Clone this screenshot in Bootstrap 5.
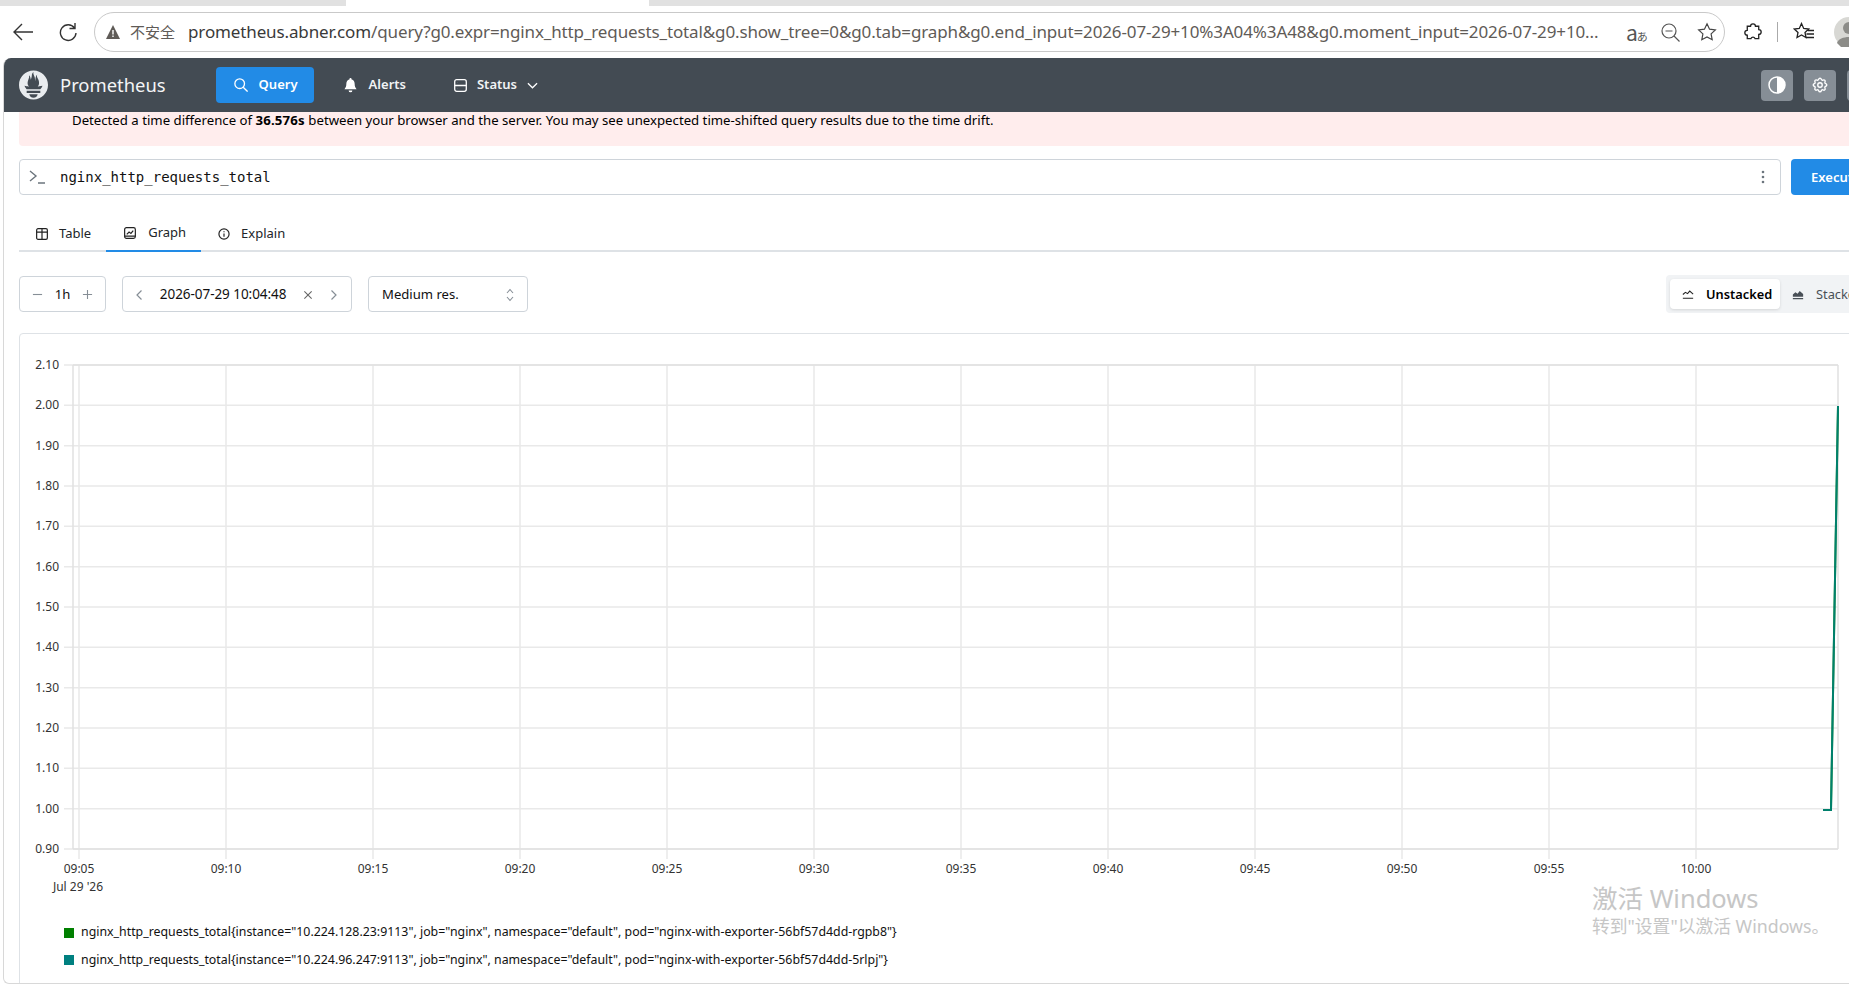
<!DOCTYPE html>
<html lang="en">
<head>
  <meta charset="UTF-8">
  <title>Prometheus Time Series Collection and Processing Server</title>
  <link href="https://cdn.jsdelivr.net/npm/bootstrap@5.3.0/dist/css/bootstrap.min.css" rel="stylesheet" />
  <style>
    html, body { height: 985px; overflow: hidden; }
    body { font-family: "Noto Sans", "Open Sans", sans-serif; font-size: 13.2px; color: #000; background: #fff; width: 1849px; position: relative; }
    svg { display: block; flex: none; }

    /* browser chrome */
    .tab-strip { height: 6px; background: #e1e1e1; }
    .tab-one { width: 346px; background: #e1e1e1; border-radius: 0 0 8px 0; }
    .tab-two { width: 303px; background: #fff; }
    .tab-rest { flex: 1; background: #e1e1e1; border-radius: 0 0 0 8px; }
    .url-row { height: 52px; padding: 6px 0 6px 13px; background: #fff; white-space: nowrap; overflow: hidden; }
    .reload-ico { margin-left: 26px; }
    .url-pill { width: 1631px; height: 40px; margin-left: 17px; padding: 0 7px 0 11px; border: 1px solid #c9c9c9; border-radius: 20px; flex: none; }
    .url-warn { font-family: "Noto Sans CJK SC", sans-serif; font-size: 15px; color: #5f5b57; margin: 0 13px 0 10px; }
    .url-text { font-size: 17px; color: #5f5b57; letter-spacing: -.13px; }
    .url-text b { font-weight: 400; color: #3a3a3a; }
    .trans-ico { margin-left: auto; font-family: "Noto Sans CJK JP", sans-serif; color: #555; width: 22px; line-height: 1; }
    .trans-big { font-size: 21px; }
    .trans-small { font-size: 11px; margin-left: -1px; }
    .zoom-ico { margin-left: 13px; }
    .star-ico { margin-left: 17px; }
    .ext-ico { margin-left: 19px; }
    .sep-ico { margin-left: 15px; }
    .fav-ico { margin-left: 15px; }
    .avatar-ico { margin-left: 19px; }

    /* app */
    .app-frame { margin-left: 3px; width: 1900px; height: 926px; overflow: hidden; border-left: 1px solid #d8d8d8; border-bottom: 1px solid #d8d8d8; border-radius: 8px 0 0 6px; }
    .app-head { height: 54px; background: #434b53; padding: 0 0 0 15px; color: #fff; }
    .brand-name { font-size: 18.4px; margin: 0 50px 0 12px; color: #f4f5f6; }
    .head-link { height: 36px; padding: 0 16px; border-radius: 4px; font-weight: 600; font-size: 13px; gap: 12px; color: #f1f3f5; margin-right: 1px; }
    .head-link.is-on { background: #228be6; width: 98px; color: #fff; margin-right: 14px; padding: 0 0 0 18px; gap: 11px; }
    .head-status { gap: 10px; margin-left: 15px; }
    .head-right { margin-left: auto; margin-right: 24px; gap: 11px; }
    .head-btn { width: 32px; height: 31px; background: #868e96; border-radius: 4px; }

    .drift { height: 34px; margin-left: 15px; background: #ffeded; padding: 0 0 0 53px; font-size: 13.2px; line-height: 16px; border-radius: 0 0 4px 4px; white-space: nowrap; }
    .drift b { font-weight: 700; letter-spacing: .2px; }

    .main-pad { padding: 13px 0 0 15px; }
    .expr-box { width: 1762px; height: 36px; border: 1px solid #ced4da; border-radius: 4px; padding: 0 15px 0 9px; }
    .expr-text { font-family: "DejaVu Sans Mono", monospace; font-size: 14px; margin-left: 15px; padding-top: 1px; color: #111; }
    .exec-btn { width: 110px; height: 36px; margin-left: 10px; background: #228be6; color: #fff; font-weight: 600; font-size: 13px; border: 0; border-radius: 4px; padding: 1px 0 0 20px; text-align: left; }

    .tab-row { margin-top: 20px; height: 37px; width: 1881px; border-bottom: 2px solid #dee2e6; }
    .tab-item { height: 37px; padding: 0 15px 0 17px; gap: 11px; font-size: 13px; color: #212529; }
    .tab-item.is-on { border-bottom: 2px solid #228be6; gap: 12px; padding: 0 15px 0 18px; }

    .ctl-row { margin-top: 23px; height: 38px; width: 1877px; }
    .ctl-box { height: 36px; border: 1px solid #ced4da; border-radius: 4px; font-size: 13.1px; color: #111; padding-top: 1px; }
    .ctl-range { width: 87px; margin-right: 16px; padding-left: 12px; padding-right: 12px; }
    .ctl-end { width: 230px; margin-right: 16px; padding-left: 12px; padding-right: 13px; }
    .ctl-date { font-size: 13.5px; letter-spacing: -.05px; }
    .ctl-res { width: 160px; padding-left: 13px; padding-right: 13px; }
    .seg-wrap { margin-left: auto; background: #f1f3f5; border-radius: 4px; padding: 4px; height: 38px; width: 230px; }
    .seg-item { height: 30px; width: 110px; padding: 1px 0 0 12px; gap: 12px; font-weight: 600; font-size: 12.8px; border-radius: 4px; background: #fff; box-shadow: 0 1px 3px rgba(0,0,0,.12); }
    .seg-item.is-off { background: none; box-shadow: none; font-weight: 400; color: #495057; }

    .chart-wrap { margin: 20px 0 0 0; width: 1900px; height: 700px; border: 1px solid #dee2e6; border-radius: 4px; }
    .chart-pic { width: 1900px; height: 580px; }
    .chart-pic text { font-family: "Noto Sans", sans-serif; font-size: 12px; fill: #333; }
    .key-list { margin: 5px 0 0 44px; font-size: 12.35px; color: #111; white-space: nowrap; }
    .key-row { height: 27.5px; gap: 7px; }
    .key-swatch { width: 10px; height: 10px; }
    .key-green { background: #008000; }
    .key-teal { background: #008080; }

    .win-mark { position: absolute; left: 1592px; top: 886px; color: #c6c6c6; font-family: "Noto Sans", "Noto Sans CJK SC", sans-serif; line-height: 1; white-space: nowrap; }
    .win-big { font-size: 25.5px; margin-bottom: 6px; }
    .win-small { font-size: 17.8px; }
  </style>
</head>
<body>

  <!-- Browser chrome -->
  <div class="tab-strip d-flex">
    <div class="tab-one"></div>
    <div class="tab-two"></div>
    <div class="tab-rest"></div>
  </div>
  <div class="url-row d-flex align-items-center">
    <svg width="20" height="20" viewBox="0 0 20 20" fill="none" stroke="#333" stroke-width="1.4"><path d="M20 10H1M9 2l-8 8 8 8"/></svg>
    <svg class="reload-ico" width="18" height="20" viewBox="0 0 18 20" fill="none" stroke="#333" stroke-width="1.4"><path d="M15.5 6A7.8 7.8 0 1 0 17 11M16 1v5.5h-5.5"/></svg>
    <div class="url-pill d-flex align-items-center">
      <svg width="14" height="14" viewBox="0 0 14 14"><path d="M7 0l7 14H0z" fill="#5f5b57"/><path d="M7 5v4.5M7 10.5V12" stroke="#fff" stroke-width="1.4"/></svg>
      <span class="url-warn">不安全</span>
      <span class="url-text"><b>prometheus.abner.com</b>/query?g0.expr=nginx_http_requests_total&amp;g0.show_tree=0&amp;g0.tab=graph&amp;g0.end_input=2026-07-29+10%3A04%3A48&amp;g0.moment_input=2026-07-29+10...</span>
      <span class="trans-ico"><span class="trans-big">a</span><span class="trans-small">あ</span></span>
      <svg class="zoom-ico" width="19" height="19" viewBox="0 0 19 19" fill="none" stroke="#555" stroke-width="1.2"><circle cx="8" cy="8" r="7"/><path d="M4.5 8h7M13 13l5.5 5.5"/></svg>
      <svg class="star-ico" width="20" height="20" viewBox="0 0 22 22" fill="none" stroke="#444" stroke-width="1.3"><path d="M11 2l2.800 5.900 6.400.8-4.700 4.400 1.200 6.400L11 16.400l-5.700 3.100 1.200-6.400L1.800 8.700l6.400-.8z"/></svg>
    </div>
    <svg class="ext-ico" width="18" height="20" viewBox="0 0 22 22" fill="none" stroke="#222" stroke-width="1.6"><path d="M8 4a3 3 0 0 1 6 0h4v4a3 3 0 0 1 0 6v5h-4.500a2.700 2.700 0 0 0-5 0H4v-4a3 3 0 0 1 0-6V4z"/></svg>
    <svg class="sep-ico" width="1" height="20"><rect width="1" height="20" fill="#aaa"/></svg>
    <svg class="fav-ico" width="22" height="20" viewBox="0 0 22 20" fill="none" stroke="#222" stroke-width="1.3"><path d="M8.500 1.500l2.200 5 5 .6-3.700 3.400 1 5-4.500-2.600L4 15.500l1-5L1.300 7.100l5-.6zM15 8.500h6M13.500 12h7.500M12.500 15.500H21"/></svg>
    <svg class="avatar-ico" width="30" height="30" viewBox="0 0 30 30"><circle cx="15" cy="15" r="15" fill="#d8d8d4"/><circle cx="15" cy="11" r="6" fill="#8c8c88"/><path d="M3 26c2-8 22-8 24 0l-4 4H7z" fill="#8c8c88"/></svg>
  </div>

  <div class="app-frame">
    <!-- Navbar -->
    <nav class="app-head d-flex align-items-center">
      <svg width="29" height="30" viewBox="0 0 24 24" fill="#e9ecef"><path d="M12 0C5.373 0 0 5.372 0 11.999c0 6.627 5.373 11.999 12 11.999s12-5.372 12-11.999C24 5.372 18.627 0 12 0zm0 22.459c-1.885 0-3.414-1.26-3.414-2.813h6.828c0 1.553-1.529 2.813-3.414 2.813zm5.64-3.745H6.359v-2.046h11.282v2.046zm-.04-3.099H6.391c-.037-.043-.075-.085-.111-.128-1.155-1.402-1.427-2.134-1.691-2.88-.004-.025 1.401.287 2.397.511 0 0 .513.119 1.262.255-.719-.843-1.146-1.915-1.146-3.01 0-2.406 1.845-4.508 1.18-6.207.648.053 1.34 1.367 1.387 3.422.689-.951.977-2.69.977-3.755 0-1.103.727-2.385 1.454-2.429-.648 1.068.168 1.984.894 4.256.272.854.237 2.289.447 3.2.07-1.892.395-4.653 1.595-5.606-.529 1.2.079 2.702.494 3.424.671 1.164 1.078 2.047 1.078 3.716 0 1.119-.413 2.173-1.11 2.997.792-.149 1.34-.283 1.34-.283l2.573-.502s-.374 1.538-1.81 3.019z"/></svg>
      <span class="brand-name">Prometheus</span>
      <div class="head-link is-on d-flex align-items-center">
        <svg width="14" height="14" viewBox="0 0 16 16" fill="none" stroke="#fff" stroke-width="1.5"><circle cx="6.5" cy="6.5" r="5.5"/><path d="M10.5 10.5l5 5"/></svg>
        Query
      </div>
      <div class="head-link d-flex align-items-center">
        <svg width="13" height="15" viewBox="0 0 14 16" fill="#fff"><path d="M7 0a1 1 0 0 1 1 1.300C10.500 2 11.500 4 11.500 6.500c0 3 .8 4 2 5.500H.5c1.200-1.500 2-2.500 2-5.500C2.500 4 3.500 2 6 1.300A1 1 0 0 1 7 0zM5 13.300h4a2 2 0 0 1-4 0z"/></svg>
        Alerts
      </div>
      <div class="head-link head-status d-flex align-items-center">
        <svg width="13" height="13" viewBox="0 0 13 13" fill="none" stroke="#fff" stroke-width="1.3"><rect x=".7" y=".7" width="11.6" height="11.6" rx="2"/><path d="M.7 6.5h11.6M3.500 3.500h.1M3.500 9.500h.1"/></svg>
        Status
        <svg width="11" height="11" viewBox="0 0 12 12" fill="none" stroke="#fff" stroke-width="1.4"><path d="M1 3.500l5 5 5-5"/></svg>
      </div>
      <div class="head-right d-flex">
        <div class="head-btn d-flex align-items-center justify-content-center">
          <svg width="18" height="18" viewBox="0 0 18 18"><circle cx="9" cy="9" r="8" fill="none" stroke="#fff" stroke-width="1.5"/><path d="M9 1a8 8 0 0 1 0 16z" fill="#fff"/></svg>
        </div>
        <div class="head-btn d-flex align-items-center justify-content-center">
          <svg width="18" height="18" viewBox="0 0 24 24" fill="none" stroke="#fff" stroke-width="1.8"><path d="M10.300 4.300c.4-1.800 3-1.800 3.400 0a1.700 1.700 0 0 0 2.600 1.100c1.500-.9 3.300.8 2.400 2.400a1.700 1.700 0 0 0 1 2.500c1.800.5 1.800 3 0 3.400a1.700 1.700 0 0 0-1 2.600c.9 1.500-.9 3.300-2.400 2.400a1.700 1.700 0 0 0-2.600 1c-.4 1.800-3 1.800-3.400 0a1.700 1.700 0 0 0-2.600-1c-1.500.9-3.300-.9-2.400-2.400a1.700 1.700 0 0 0-1-2.600c-1.800-.4-1.800-3 0-3.400a1.700 1.700 0 0 0 1-2.500c-.9-1.600.9-3.300 2.400-2.400a1.700 1.700 0 0 0 2.600-1.100z"/><circle cx="12" cy="12" r="3"/></svg>
        </div>
        <div class="head-btn"></div>
      </div>
    </nav>

    <!-- Time drift warning -->
    <div class="drift">Detected a time difference of <b>36.576s</b> between your browser and the server. You may see unexpected time-shifted query results due to the time drift.</div>

    <div class="main-pad">
      <!-- Expression -->
      <div class="d-flex">
        <div class="expr-box d-flex align-items-center">
          <svg width="16" height="14" viewBox="0 0 16 14" fill="none" stroke="#6c757d" stroke-width="1.4"><path d="M1 1l6 5-6 5M9 13h7"/></svg>
          <span class="expr-text">nginx_http_requests_total</span>
          <svg class="ms-auto" width="4" height="14" viewBox="0 0 4 14" fill="#6c757d"><circle cx="2" cy="2" r="1.3"/><circle cx="2" cy="7" r="1.3"/><circle cx="2" cy="12" r="1.3"/></svg>
        </div>
        <button class="exec-btn" type="button">Execute</button>
      </div>

      <!-- Tabs -->
      <div class="tab-row d-flex">
        <div class="tab-item d-flex align-items-center">
          <svg width="12" height="12" viewBox="0 0 13 13" fill="none" stroke="#222" stroke-width="1.3"><rect x=".7" y=".7" width="11.6" height="11.6" rx="1.5"/><path d="M.7 4.5h11.6M6.500 .7v11.6"/></svg>
          Table
        </div>
        <div class="tab-item is-on d-flex align-items-center">
          <svg width="12" height="12" viewBox="0 0 13 13" fill="none" stroke="#222" stroke-width="1.3"><rect x=".7" y=".7" width="11.6" height="11.6" rx="2"/><path d="M3 8l2.500-2.500 2 1.500L10 4M.7 9.800h11.600"/></svg>
          Graph
        </div>
        <div class="tab-item d-flex align-items-center">
          <svg width="12" height="12" viewBox="0 0 13 13" fill="none" stroke="#222" stroke-width="1.3"><circle cx="6.5" cy="6.5" r="5.5"/><path d="M6.500 6v3.500M6.500 3.500v1.200"/></svg>
          Explain
        </div>
      </div>

      <!-- Graph controls -->
      <div class="ctl-row d-flex align-items-center">
        <div class="ctl-box ctl-range d-flex align-items-center justify-content-between">
          <svg width="11" height="11" viewBox="0 0 12 12" stroke="#868e96" stroke-width="1.2"><path d="M1 6h10"/></svg>
          <span>1h</span>
          <svg width="11" height="11" viewBox="0 0 12 12" stroke="#868e96" stroke-width="1.2"><path d="M1 6h10M6 1v10"/></svg>
        </div>
        <div class="ctl-box ctl-end d-flex align-items-center justify-content-between">
          <svg width="8" height="12" viewBox="0 0 8 12" fill="none" stroke="#868e96" stroke-width="1.2"><path d="M6.500 1.500L2 6l4.500 4.500"/></svg>
          <span class="ctl-date">2026-07-29 10:04:48</span>
          <svg width="10" height="10" viewBox="0 0 11 11" stroke="#666" stroke-width="1.2"><path d="M1.500 1.500l8 8M9.500 1.500l-8 8"/></svg>
          <svg width="8" height="12" viewBox="0 0 8 12" fill="none" stroke="#868e96" stroke-width="1.2"><path d="M1.500 1.500L6 6l-4.500 4.500"/></svg>
        </div>
        <div class="ctl-box ctl-res d-flex align-items-center justify-content-between">
          <span>Medium res.</span>
          <svg width="8" height="14" viewBox="0 0 8 14" fill="none" stroke="#868e96" stroke-width="1.1"><path d="M1 5l3-3.500L7 5M1 9l3 3.500L7 9"/></svg>
        </div>
        <div class="seg-wrap d-flex">
          <div class="seg-item d-flex align-items-center">
            <svg width="12" height="11" viewBox="0 0 14 12" fill="none" stroke="#222" stroke-width="1.2"><path d="M1 6l3-2.500 2.500 1.500L9 2l4 3.500M1 10.500h12"/></svg>
            Unstacked
          </div>
          <div class="seg-item is-off d-flex align-items-center">
            <svg width="12" height="11" viewBox="0 0 14 12" fill="#495057"><path d="M1 6l3-2.500 2.500 1.500L9 2l4 3.500v3H1zM1 10h12v1.500H1z"/></svg>
            Stacked
          </div>
        </div>
      </div>

      <!-- Graph -->
      <div class="chart-wrap">
        <svg class="chart-pic" id="chartPic"></svg>
        <div class="key-list">
          <div class="key-row d-flex align-items-center"><span class="key-swatch key-green"></span>nginx_http_requests_total{instance="10.224.128.23:9113", job="nginx", namespace="default", pod="nginx-with-exporter-56bf57d4dd-rgpb8"}</div>
          <div class="key-row d-flex align-items-center"><span class="key-swatch key-teal"></span>nginx_http_requests_total{instance="10.224.96.247:9113", job="nginx", namespace="default", pod="nginx-with-exporter-56bf57d4dd-5rlpj"}</div>
        </div>
      </div>
    </div>
  </div>

  <!-- Windows activation watermark -->
  <div class="win-mark">
    <div class="win-big">激活 Windows</div>
    <div class="win-small">转到"设置"以激活 Windows。</div>
  </div>

  <script>
    function drawChart() {
      const pic = document.getElementById('chartPic');
      const box = pic.getBoundingClientRect();
      const ox = box.left, oy = box.top;
      // plot edges, in page pixels
      const plotL = 73, plotR = 1838, plotT = 365, plotB = 849;
      const x0 = 79, xStep = 147, yStep = (plotB - plotT) / 12;
      let s = '';
      const ln = (a, b, c, d, col, w) => s += `<line x1="${a-ox}" y1="${b-oy}" x2="${c-ox}" y2="${d-oy}" stroke="${col}" stroke-width="${w}"/>`;
      const tx = (a, b, t, anchor) => s += `<text x="${a-ox}" y="${b-oy}" text-anchor="${anchor}">${t}</text>`;

      for (let i = 0; i <= 12; i++) {
        const y = plotT + i * yStep;
        ln(64, y, plotR, y, '#e9e9e9', 1.5);
        tx(59, y + 4, (2.1 - i * 0.1).toFixed(2), 'end');
      }
      for (let i = 0; i < 12; i++) {
        const x = x0 + i * xStep;
        const mins = 5 + i * 5;
        const h = String(9 + Math.floor(mins / 60)).padStart(2, '0');
        const m = String(mins % 60).padStart(2, '0');
        ln(x, plotT, x, plotB + 10, '#e9e9e9', 1.5);
        tx(x, 873, `${h}:${m}`, 'middle');
      }
      tx(78, 891, "Jul 29 '26", 'middle');
      ln(plotL, plotT, plotR, plotT, '#e0e0e0', 1.5);
      ln(plotL, plotB, plotR, plotB, '#e0e0e0', 1.5);
      ln(plotL, plotT, plotL, plotB, '#e0e0e0', 1.5);
      ln(plotR, plotT, plotR, plotB, '#e0e0e0', 1.5);

      // both series only start at the very end of the range
      const pts = `${1823-ox},${810-oy} ${1831-ox},${810-oy} ${1838-ox},${406-oy}`;
      s += `<polyline fill="none" stroke="#008000" stroke-width="2" points="${pts}"/>`;
      s += `<polyline fill="none" stroke="#008080" stroke-width="2" opacity=".85" points="${pts}"/>`;
      pic.innerHTML = s;
    }

    drawChart();
  </script>

  <script src="https://cdn.jsdelivr.net/npm/bootstrap@5.3.0/dist/js/bootstrap.bundle.min.js"></script>
</body>
</html>
